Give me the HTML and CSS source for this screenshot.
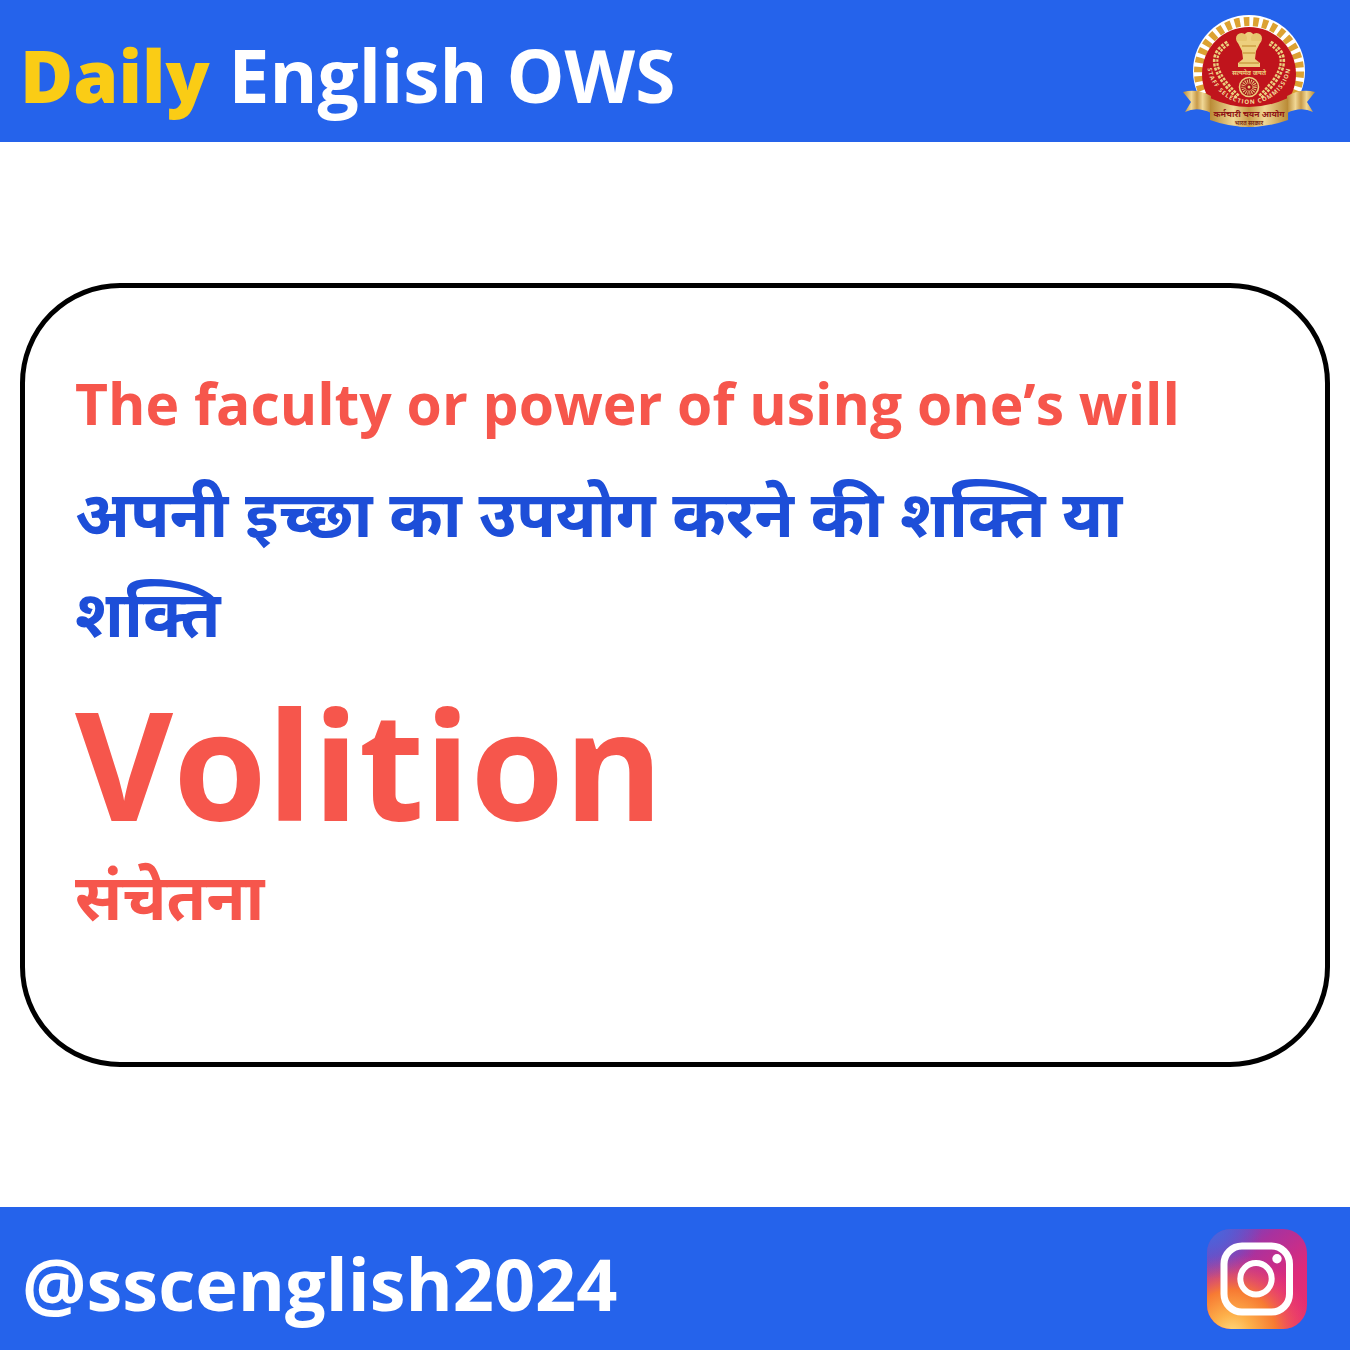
FILE: index.html
```html
<!DOCTYPE html>
<html lang="en">
<head>
<meta charset="utf-8">
<title>Daily English OWS</title>
<link rel="stylesheet" href="styles.css">
</head>
<body>
<div class="page">
  <header class="bar top">
    <h1 class="title"><span class="daily">Daily</span> English OWS</h1>
    <svg class="emblem" viewBox="0 0 132 112" width="132" height="112">
      <defs>
        <linearGradient id="gold" x1="0" y1="0" x2="1" y2="0">
          <stop offset="0" stop-color="#b98a35"/>
          <stop offset="0.3" stop-color="#f0d795"/>
          <stop offset="0.5" stop-color="#c89a48"/>
          <stop offset="0.7" stop-color="#f0d795"/>
          <stop offset="1" stop-color="#b98a35"/>
        </linearGradient>
        <path id="arc" d="M24 47 A42 42 0 0 0 108 47"/>
      </defs>
      <circle cx="66" cy="56" r="56" fill="#fff"/>
      <circle cx="66" cy="57" r="50.500" fill="none" stroke="#dca232" stroke-width="9" stroke-dasharray="5.500 3.800"/>
      <circle cx="66" cy="59" r="47" fill="#c0141c"/>
      <path d="M45 28 Q16 45 55 82" fill="none" stroke="#edcf7d" stroke-width="5.500" stroke-dasharray="2.800 1.400"/>
      <path d="M87 28 Q116 45 77 82" fill="none" stroke="#edcf7d" stroke-width="5.500" stroke-dasharray="2.800 1.400"/>
      <path d="M45 28 Q16 45 55 82M87 28 Q116 45 77 82" fill="none" stroke="#a8101a" stroke-width="0.700"/>
      <circle cx="66" cy="22" r="5" fill="#edcf7d"/>
      <circle cx="58.500" cy="23.500" r="5.500" fill="#e6c56e"/>
      <circle cx="73.500" cy="23.500" r="5.500" fill="#e6c56e"/>
      <path d="M54 26 H78 L73 36 L72 44 L77 48 V52 H55 V48 L60 44 L59 36Z" fill="#edcf7d"/>
      <path d="M59 31H73M60 38H72M56 48H76" stroke="#b8821f" stroke-width="0.900"/>
      <text class="motto" x="66" y="60" text-anchor="middle">सत्यमेव जयते</text>
      <circle cx="66" cy="72" r="9.500" fill="#a8141a" stroke="#edcf7d" stroke-width="1.600"/>
      <circle cx="66" cy="72" r="5.500" fill="none" stroke="#edcf7d" stroke-width="4.500" stroke-dasharray="0.800 1"/>
      <circle cx="66" cy="72" r="1.500" fill="#edcf7d"/>
      <text class="arc-text"><textPath href="#arc" startOffset="50%" text-anchor="middle">STAFF SELECTION COMMISSION</textPath></text>
      <path d="M0 77 Q14 73 28 81 L28 98 Q14 91 2 97 L8 87Z" fill="url(#gold)"/>
      <path d="M132 77 Q118 73 104 81 L104 98 Q118 91 130 97 L124 87Z" fill="url(#gold)"/>
      <path d="M27 83 Q66 101 105 83 V105 Q66 119 27 105Z" fill="url(#gold)"/>
      <text class="rib1" x="66" y="102" text-anchor="middle">कर्मचारी चयन आयोग</text>
      <text class="rib2" x="66" y="110" text-anchor="middle">भारत सरकार</text>
    </svg>
  </header>
  <main class="middle">
    <section class="card">
      <p class="meaning">The faculty or power of using one’s will</p>
      <p class="hindi">अपनी इच्छा का उपयोग करने की शक्ति या शक्ति</p>
      <p class="word">Volition</p>
      <p class="word-hi">संचेतना</p>
    </section>
  </main>
  <footer class="bar bottom">
    <div class="handle">@sscenglish2024</div>
    <svg class="insta" viewBox="0 0 100 100" width="100" height="100">
      <defs>
        <clipPath id="sq"><rect width="100" height="100" rx="24"/></clipPath>
        <linearGradient id="igb" x1="0.1" y1="0" x2="0.9" y2="1">
          <stop offset="0" stop-color="#5a4fd0"/>
          <stop offset="0.3" stop-color="#a8329f"/>
          <stop offset="0.65" stop-color="#dd2a7b"/>
          <stop offset="1" stop-color="#e8326a"/>
        </linearGradient>
        <radialGradient id="igy" cx="0.25" cy="1.05" r="0.8">
          <stop offset="0" stop-color="#ffdc80"/>
          <stop offset="0.25" stop-color="#fdb04a"/>
          <stop offset="0.55" stop-color="#f77a33"/>
          <stop offset="1" stop-color="#f0407a" stop-opacity="0"/>
        </radialGradient>
        <radialGradient id="igt" cx="0.05" cy="0" r="0.5">
          <stop offset="0" stop-color="#4a66dc"/>
          <stop offset="1" stop-color="#4a66dc" stop-opacity="0"/>
        </radialGradient>
      </defs>
      <g clip-path="url(#sq)">
        <rect width="100" height="100" fill="url(#igb)"/>
        <rect width="100" height="100" fill="url(#igy)"/>
        <rect width="100" height="100" fill="url(#igt)"/>
      </g>
      <rect x="17" y="17" width="65.500" height="66" rx="18" fill="none" stroke="#fff" stroke-width="7"/>
      <circle cx="49" cy="49.700" r="15.700" fill="none" stroke="#fff" stroke-width="6"/>
      <circle cx="70" cy="29.700" r="4.700" fill="#fff"/>
    </svg>
  </footer>
</div>
</body>
</html>
```
FILE: styles.css
```css
* { box-sizing: border-box; }
html, body { margin: 0; padding: 0; background: #fff; }
.page { width: 1350px; height: 1350px; display: flex; flex-direction: column; font-family: "Open Sans", "Noto Sans", sans-serif; overflow: hidden; }
.bar { background: #2563eb; display: flex; align-items: center; justify-content: space-between; color: #fff; }
.top { height: 142px; padding: 8px 35px 0 20px; }
.bottom { height: 143px; padding: 8px 43px 0 22px; }
.title { margin: 0; font-size: 73px; font-weight: 700; line-height: 1; }
.daily { color: #facc15; font-size: 72.5px; font-weight: 800; }
.emblem { flex: none; margin-top: -8px; }
.insta { flex: none; margin-top: -8px; }
.middle { flex: 1; display: flex; align-items: center; justify-content: center; padding: 0 20px; }
.card { width: 100%; height: 784px; border: 5px solid #000; border-radius: 100px; padding: 78px 60px 0 50px; }
.card p { margin: 0; font-weight: 700; }
.meaning { font-size: 57px; line-height: 75px; color: #f6564c; }
.hindi { font-size: 64.5px; line-height: 100px; color: #1d4ed8; margin-top: 21px !important; }
.word { font-size: 151px; line-height: 170px; color: #f6564c; margin-top: 16px !important; }
.word-hi { font-size: 64px; line-height: 96px; color: #f6564c; }
.handle { font-size: 72px; font-weight: 700; line-height: 1; }
.motto { font-family: "Noto Sans", sans-serif; font-size: 6.5px; font-weight: 700; fill: #edcf7d; }
.arc-text { font-family: "Open Sans", sans-serif; font-size: 6px; font-weight: 700; fill: #f3dc9a; letter-spacing: 1px; }
.rib1 { font-family: "Noto Sans", sans-serif; font-size: 8.5px; font-weight: 700; fill: #8f1616; }
.rib2 { font-family: "Noto Sans", sans-serif; font-size: 5.5px; font-weight: 700; fill: #7a2a10; }
```
